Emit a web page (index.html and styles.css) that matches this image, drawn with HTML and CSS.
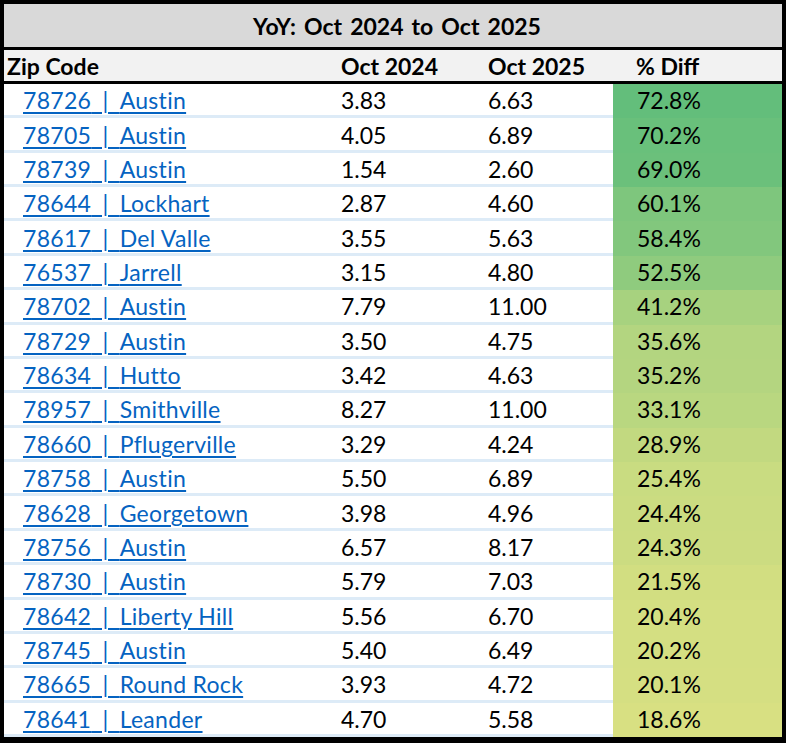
FILE: index.html
```html
<!DOCTYPE html>
<html lang="en">
<head>
<meta charset="utf-8">
<title>YoY: Oct 2024 to Oct 2025</title>
<link rel="stylesheet" href="styles.css">
</head>
<body>
<div class="sheet">
  <div class="title">YoY: Oct 2024 to Oct 2025</div>
  <div class="head">
    <div class="h h-zip">Zip Code</div>
    <div class="h h-a">Oct 2024</div>
    <div class="h h-b">Oct 2025</div>
    <div class="h h-p">% Diff</div>
  </div>
  <div class="rows">
    <div class="row"><div class="c zip"><a href="#">78726<span class="sep"> | </span>Austin</a></div><div class="c a">3.83</div><div class="c b">6.63</div><div class="c pct" style="background:#63be7b">72.8%</div></div>
    <div class="row"><div class="c zip"><a href="#">78705<span class="sep"> | </span>Austin</a></div><div class="c a">4.05</div><div class="c b">6.89</div><div class="c pct" style="background:#69c07b">70.2%</div></div>
    <div class="row"><div class="c zip"><a href="#">78739<span class="sep"> | </span>Austin</a></div><div class="c a">1.54</div><div class="c b">2.60</div><div class="c pct" style="background:#6bc07b">69.0%</div></div>
    <div class="row"><div class="c zip"><a href="#">78644<span class="sep"> | </span>Lockhart</a></div><div class="c a">2.87</div><div class="c b">4.60</div><div class="c pct" style="background:#7ec67d">60.1%</div></div>
    <div class="row"><div class="c zip"><a href="#">78617<span class="sep"> | </span>Del Valle</a></div><div class="c a">3.55</div><div class="c b">5.63</div><div class="c pct" style="background:#82c77d">58.4%</div></div>
    <div class="row"><div class="c zip"><a href="#">76537<span class="sep"> | </span>Jarrell</a></div><div class="c a">3.15</div><div class="c b">4.80</div><div class="c pct" style="background:#8fcb7e">52.5%</div></div>
    <div class="row"><div class="c zip"><a href="#">78702<span class="sep"> | </span>Austin</a></div><div class="c a">7.79</div><div class="c b">11.00</div><div class="c pct" style="background:#a7d27f">41.2%</div></div>
    <div class="row"><div class="c zip"><a href="#">78729<span class="sep"> | </span>Austin</a></div><div class="c a">3.50</div><div class="c b">4.75</div><div class="c pct" style="background:#b3d580">35.6%</div></div>
    <div class="row"><div class="c zip"><a href="#">78634<span class="sep"> | </span>Hutto</a></div><div class="c a">3.42</div><div class="c b">4.63</div><div class="c pct" style="background:#b4d580">35.2%</div></div>
    <div class="row"><div class="c zip"><a href="#">78957<span class="sep"> | </span>Smithville</a></div><div class="c a">8.27</div><div class="c b">11.00</div><div class="c pct" style="background:#b9d780">33.1%</div></div>
    <div class="row"><div class="c zip"><a href="#">78660<span class="sep"> | </span>Pflugerville</a></div><div class="c a">3.29</div><div class="c b">4.24</div><div class="c pct" style="background:#c2d980">28.9%</div></div>
    <div class="row"><div class="c zip"><a href="#">78758<span class="sep"> | </span>Austin</a></div><div class="c a">5.50</div><div class="c b">6.89</div><div class="c pct" style="background:#c9dc81">25.4%</div></div>
    <div class="row"><div class="c zip"><a href="#">78628<span class="sep"> | </span>Georgetown</a></div><div class="c a">3.98</div><div class="c b">4.96</div><div class="c pct" style="background:#cbdc81">24.4%</div></div>
    <div class="row"><div class="c zip"><a href="#">78756<span class="sep"> | </span>Austin</a></div><div class="c a">6.57</div><div class="c b">8.17</div><div class="c pct" style="background:#ccdc81">24.3%</div></div>
    <div class="row"><div class="c zip"><a href="#">78730<span class="sep"> | </span>Austin</a></div><div class="c a">5.79</div><div class="c b">7.03</div><div class="c pct" style="background:#d2de81">21.5%</div></div>
    <div class="row"><div class="c zip"><a href="#">78642<span class="sep"> | </span>Liberty Hill</a></div><div class="c a">5.56</div><div class="c b">6.70</div><div class="c pct" style="background:#d4df82">20.4%</div></div>
    <div class="row"><div class="c zip"><a href="#">78745<span class="sep"> | </span>Austin</a></div><div class="c a">5.40</div><div class="c b">6.49</div><div class="c pct" style="background:#d4df82">20.2%</div></div>
    <div class="row"><div class="c zip"><a href="#">78665<span class="sep"> | </span>Round Rock</a></div><div class="c a">3.93</div><div class="c b">4.72</div><div class="c pct" style="background:#d5df82">20.1%</div></div>
    <div class="row"><div class="c zip"><a href="#">78641<span class="sep"> | </span>Leander</a></div><div class="c a">4.70</div><div class="c b">5.58</div><div class="c pct" style="background:#d8e082">18.6%</div></div>
  </div>
</div>
</body>
</html>
```

FILE: styles.css
```css
html, body {
  margin: 0;
  padding: 0;
  background: #000;
}

.sheet {
  width: 786px;
  height: 743px;
  box-sizing: border-box;
  border: 4px solid #000;
  border-bottom-width: 6px;
  background: #fff;
  display: flex;
  flex-direction: column;
  font-family: "Lato", "Open Sans", "Liberation Sans", sans-serif;
  font-size: 23px;
  color: #000;
}

.title {
  height: 43px;
  flex: 0 0 43px;
  background: #d9d9d9;
  border-bottom: 3px solid #000;
  display: flex;
  align-items: center;
  justify-content: center;
  font-weight: 700;
  word-spacing: 2.5px;
  padding-left: 8px;
}

.head {
  height: 31px;
  flex: 0 0 31px;
  background: #f2f2f2;
  border-bottom: 3px solid #000;
  display: grid;
  grid-template-columns: 326px 150px 133px 169px;
  align-items: center;
  font-weight: 700;
}

.h-zip { padding-left: 3px; }
.h-a { padding-left: 11px; }
.h-b { padding-left: 8px; }
.h-p { padding-left: 23px; }

.rows {
  flex: 1 1 auto;
  display: grid;
  grid-template-rows: repeat(19, 1fr);
}

.row {
  display: grid;
  grid-template-columns: 326px 150px 133px 169px;
}

.c {
  display: flex;
  align-items: center;
  border-bottom: 3px solid #ddebf7;
  padding-top: 1px;
}

.zip { padding-left: 19px; }
.a { padding-left: 11px; }
.b { padding-left: 8px; }

.pct {
  border-bottom: none;
  padding-left: 24px;
  padding-bottom: 3px;
}

.zip a {
  color: #0563c1;
  text-decoration: underline;
  text-decoration-thickness: 2px;
  text-underline-offset: 3px;
  letter-spacing: 0.3px;
}

.sep {
  word-spacing: 5px;
}
```
